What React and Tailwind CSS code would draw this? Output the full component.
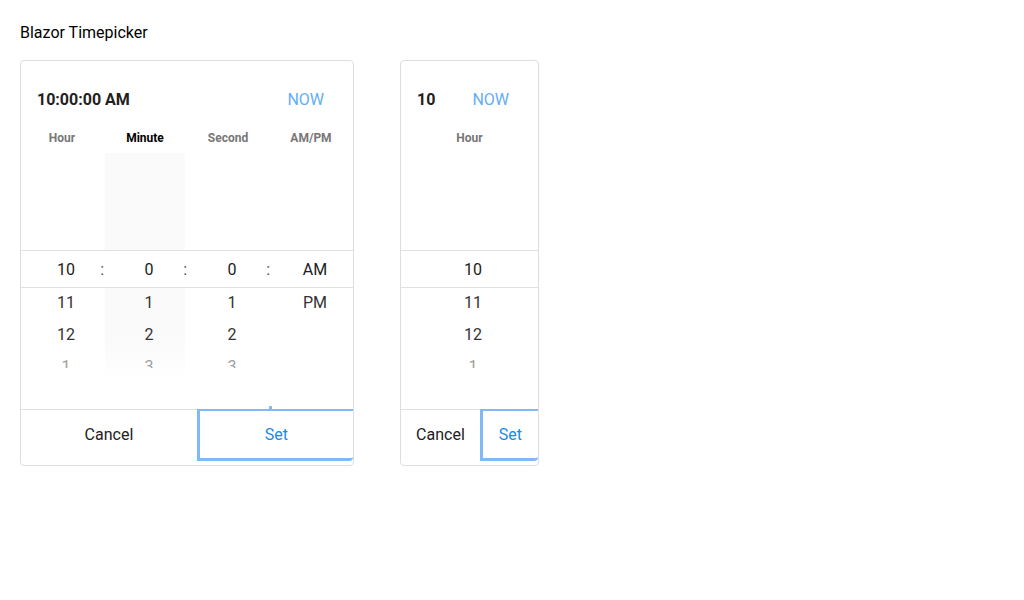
import React from 'react';

const FONT = { fontFamily: 'Roboto, "Liberation Sans", Arial, sans-serif' };

function Footer({ cancelW, setW, mark }) {
  return (
    <div className="relative flex h-[56px] items-start border-t border-[#e0e0e0]">
      <button className="flex h-[49px] items-center justify-center text-[16px] text-[#212121]" style={{ width: cancelW }}>
        Cancel
      </button>
      <button
        className="-mt-px flex h-[52px] items-center justify-center rounded-br-[4px] border-t-2 border-b-[3px] border-l-[3px] border-[#7fb9f6] text-[16px] text-[#1e88e5]"
        style={{ width: setW }}
      >
        Set
      </button>
      {mark && <div className="absolute left-[248px] top-[-4px] h-[3px] w-[3px] bg-[#7fb9f6]" />}
    </div>
  );
}

function Cell({ value, colon, tone = 'text-[#333]' }) {
  return (
    <div className={`relative flex flex-1 items-center justify-center pl-[7px] text-[16px] ${tone}`}>
      {value}
      {colon && <span className="absolute right-0 text-[#555]">:</span>}
    </div>
  );
}

function FullPicker() {
  const labels = ['Hour', 'Minute', 'Second', 'AM/PM'];
  const rows = [
    ['11', '1', '1', 'PM'],
    ['12', '2', '2', ''],
  ];
  return (
    <div className="w-[334px] overflow-hidden rounded-[4px] border border-[#dedede] bg-white">
      <div className="flex items-center justify-between pl-[16px] pr-[29px] pt-[27px]">
        <span className="text-[16px] font-bold leading-6 text-[#212121]">10:00:00 AM</span>
        <span className="text-[16px] leading-6 text-[#64adf7]">NOW</span>
      </div>
      <div className="mt-[18px] flex text-[12px] font-bold leading-4">
        {labels.map((l) => (
          <div key={l} className={`flex-1 text-center ${l === 'Minute' ? 'pr-[1px] text-black' : 'pr-[1px] text-[#777]'}`}>
            {l}
          </div>
        ))}
      </div>
      <div className="relative h-[263px]">
        <div className="absolute left-[84px] top-[7px] h-[232px] w-[80px] bg-gradient-to-b from-[#fafafa] via-[#fafafa] via-80% to-white" />
        <div className="h-[104px]" />
        <div className="relative flex h-[38px] border-y border-[#e0e0e0] bg-white pt-[2px]">
          <Cell value="10" colon tone="text-[#212121]" />
          <Cell value="0" colon tone="text-[#212121]" />
          <Cell value="0" colon tone="text-[#212121]" />
          <Cell value="AM" tone="text-[#212121]" />
        </div>
        <div className="relative -mt-[1px] h-[81px] overflow-hidden">
          {rows.map((r, i) => (
            <div key={i} className="flex h-8">
              {r.map((v, j) => (
                <Cell key={j} value={v} />
              ))}
            </div>
          ))}
          <div className="flex h-8">
            <Cell value="1" tone="text-[#a0a0a0]" />
            <Cell value="3" tone="text-[#a0a0a0]" />
            <Cell value="3" tone="text-[#a0a0a0]" />
            <Cell value="" />
          </div>
        </div>
      </div>
      <Footer cancelW={177} setW={157} mark />
    </div>
  );
}

function HourPicker() {
  return (
    <div className="w-[139px] overflow-hidden rounded-[4px] border border-[#dedede] bg-white">
      <div className="flex items-center justify-between pl-[16px] pr-[29px] pt-[27px]">
        <span className="text-[16px] font-bold leading-6 text-[#212121]">10</span>
        <span className="text-[16px] leading-6 text-[#64adf7]">NOW</span>
      </div>
      <div className="mt-[18px] text-center text-[12px] font-bold leading-4 text-[#777]">Hour</div>
      <div className="relative h-[263px]">
        <div className="h-[104px]" />
        <div className="flex h-[38px] border-y border-[#e0e0e0] pt-[2px]">
          <Cell value="10" tone="text-[#212121]" />
        </div>
        <div className="-mt-[1px] h-[81px] overflow-hidden">
          <div className="flex h-8"><Cell value="11" /></div>
          <div className="flex h-8"><Cell value="12" /></div>
          <div className="flex h-8"><Cell value="1" tone="text-[#a0a0a0]" /></div>
        </div>
      </div>
      <Footer cancelW={80} setW={59} />
    </div>
  );
}

export default function App() {
  return (
    <div className="min-h-[600px] w-[1024px] bg-white px-5 pt-[22px]" style={FONT}>
      <h1 className="text-[16px] leading-[22px] text-black">Blazor Timepicker</h1>
      <div className="mt-[16px] flex items-start gap-[46px]">
        <FullPicker />
        <HourPicker />
      </div>
    </div>
  );
}
